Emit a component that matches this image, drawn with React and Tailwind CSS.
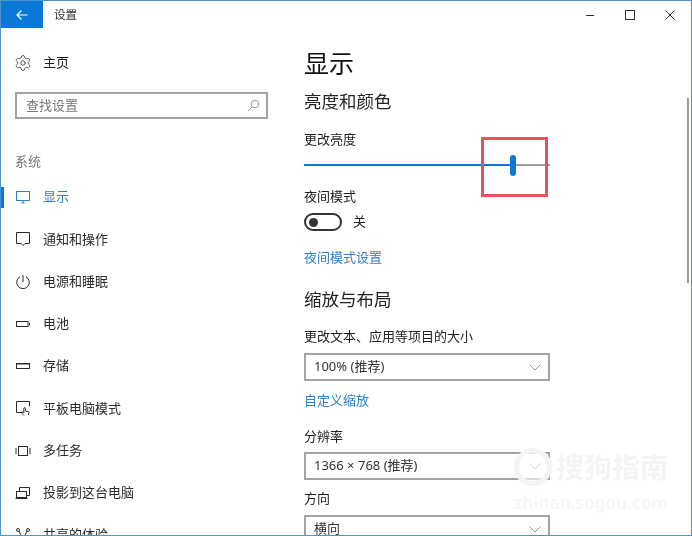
import React from "react";
import { Settings } from "lucide-react";

const font = { fontFamily: '"Noto Sans", "Noto Sans CJK SC", sans-serif' };

const Ico = ({ children }) => (
  <svg width="16" height="16" viewBox="0 0 16 16" fill="none" stroke="currentColor" strokeWidth="1" className="shrink-0">
    {children}
  </svg>
);

const icons = {
  display: (<Ico><rect x="1.5" y="2.5" width="13" height="9" /><path d="M8 11.5v2.5M6.5 14h3" /></Ico>),
  notify: (<Ico><path d="M1.5 1.5h13v11h-4.500l-2 2-2-2h-4.500z" /></Ico>),
  power: (<Ico><path d="M8 1v7" /><path d="M5 2.800a6.300 6.300 0 1 0 6 0" /></Ico>),
  battery: (<Ico><rect x="1.5" y="5.500" width="11.500" height="5" /><path d="M14.500 7v2.500" /></Ico>),
  storage: (<Ico><rect x="1.5" y="5.500" width="13" height="5" /><path d="M2 6.500h12" strokeOpacity="0.5" /></Ico>),
  tablet: (<Ico><path d="M7 12.500H1.500v-11h13v5" /><path d="M9 15.500c-1.500-1.500-2.500-2.500-2-3.200.5-.5 1.200 0 1.800.6V8.500a.8.8 0 0 1 1.600 0v2.500l3 .6c.5.1.7.5.6 1l-.6 2.400" /></Ico>),
  multi: (<Ico><rect x="3.500" y="3.500" width="9" height="9" /><path d="M1 5v6M15 5v6" /></Ico>),
  project: (<Ico><path d="M4.500 6V2.500h10v8H12" /><rect x="1.500" y="6.500" width="10" height="6" /><path d="M.5 13.500h12" /></Ico>),
  share: (<Ico><circle cx="3" cy="3" r="1.500" /><circle cx="13" cy="3" r="1.500" /><circle cx="8" cy="13" r="1.500" /><path d="M4 4l3.500 7.500M12 4l-3.500 7.500" /></Ico>),
};

const items = [
  ["display", "显示"],
  ["notify", "通知和操作"],
  ["power", "电源和睡眠"],
  ["battery", "电池"],
  ["storage", "存储"],
  ["tablet", "平板电脑模式"],
  ["multi", "多任务"],
  ["project", "投影到这台电脑"],
  ["share", "共享的体验"],
];

const Select = ({ children, className }) => (
  <div className={`${className} w-[246px] h-[28px] border-2 border-[#a3a3a3] flex items-center justify-between pl-[8px] pr-[7px] text-[13px] text-[#333]`}>
    <span>{children}</span>
    <svg width="12" height="7" viewBox="0 0 12 7" fill="none" stroke="#999" strokeWidth="1"><path d="M.5.5L6 6 11.500.5" /></svg>
  </div>
);

const Line = ({ className, children }) => (
  <div className={`${className} h-[20px] leading-[20px]`}>{children}</div>
);

export default function App() {
  return (
    <div style={font} className="relative w-[692px] h-[536px] overflow-hidden bg-white border border-[#4a94cf] flex flex-col text-[#222] blur-[0.3px]">
      <header className="flex h-[28px] shrink-0 items-center">
        <div className="w-[42px] h-[27px] -mt-[1px] bg-[#0a78d7] flex items-center justify-center text-white">
          <svg width="12" height="12" viewBox="0 0 12 12" fill="none" stroke="currentColor" strokeWidth="1.200"><path d="M11.500 6H1M5.500 1.500L1 6l4.500 4.500" /></svg>
        </div>
        <span className="ml-[11px] -mt-[1px] text-[11.500px] text-[#333]">设置</span>
        <div className="ml-auto flex items-center text-[#333]">
          <svg width="10" height="10" viewBox="0 0 10 10" fill="none" stroke="currentColor"><path d="M1 5.500h8" /></svg>
          <svg width="10" height="10" viewBox="0 0 10 10" fill="none" stroke="currentColor" className="ml-[30px]"><rect x=".5" y=".5" width="9" height="9" /></svg>
          <svg width="10" height="10" viewBox="0 0 10 10" fill="none" stroke="currentColor" className="ml-[30px] mr-[16px]"><path d="M.5.5l9 9M9.500.5l-9 9" /></svg>
        </div>
      </header>

      <div className="flex flex-1 min-h-0">
        <aside className="w-[303px] shrink-0 pt-[22px] text-[13px]">
          <div className="flex items-center h-[24px] pl-[13px] gap-[11px]">
            <Settings size={18} strokeWidth={1.200} color="#444" className="shrink-0" />
            <span>主页</span>
          </div>
          <div className="mt-[17px] ml-[14px] w-[253px] h-[27px] border-2 border-[#a3a3a3] flex items-center justify-between pl-[9px] pr-[6px] text-[#777]">
            <span>查找设置</span>
            <svg width="13" height="13" viewBox="0 0 13 13" fill="none" stroke="#999"><circle cx="8" cy="5" r="3.800" /><path d="M5.300 7.700L1 12" /></svg>
          </div>
          <Line className="mt-[32px] pl-[14px] text-[#777]">系统</Line>
          <nav className="mt-[5px]">
            {items.map(([k, label], i) => (
              <div key={k} className={`relative flex items-center h-[42.250px] pl-[14px] gap-[12px] ${i === 0 ? "text-[#2d7fc8]" : "text-[#2b2b2b]"}`}>
                {i === 0 && <span className="absolute left-0 top-[11px] w-[3px] h-[21px] bg-[#0a78d7]" />}
                {icons[k]}
                <span>{label}</span>
              </div>
            ))}
          </nav>
        </aside>

        <main className="flex-1 min-w-0 text-[13px]">
          <h1 className="mt-[16px] text-[25px] leading-[36px] text-[#111] h-[36px]">显示</h1>
          <h2 className="mt-[7px] text-[17.500px] leading-[26px] h-[26px] text-[#222]">亮度和颜色</h2>
          <Line className="mt-[15px]">更改亮度</Line>
          <div className="mt-[5px] w-[246px] h-[22px] flex items-center">
            <div className="w-[206px] h-[2px] bg-[#0a78d7]" />
            <div className="w-[6px] h-[21px] rounded-full bg-[#0a78d7] shrink-0" />
            <div className="flex-1 h-[2px] bg-[#a0a0a0]" />
          </div>
          <Line className="mt-[10px]">夜间模式</Line>
          <div className="mt-[7px] flex items-center h-[18px]">
            <div className="w-[38px] h-[18px] rounded-full border-2 border-[#333] flex items-center pl-[3px]">
              <div className="w-[9px] h-[9px] rounded-full bg-[#333]" />
            </div>
            <span className="ml-[11px]">关</span>
          </div>
          <Line className="mt-[16px] text-[#2d7fc8]">夜间模式设置</Line>
          <h2 className="mt-[19px] text-[17.500px] leading-[26px] h-[26px] text-[#222]">缩放与布局</h2>
          <Line className="mt-[14px]">更改文本、应用等项目的大小</Line>
          <Select className="mt-[7px]">100% (推荐)</Select>
          <Line className="mt-[9px] text-[#2d7fc8]">自定义缩放</Line>
          <Line className="mt-[16px]">分辨率</Line>
          <Select className="mt-[6px]">1366 × 768 (推荐)</Select>
          <Line className="mt-[8px]">方向</Line>
          <Select className="mt-[7px]">横向</Select>
        </main>
      </div>

      {/* overlays */}
      <div className="absolute right-[2px] top-[97px] w-[2px] h-[185px] bg-[#9a9a9a]" />
      <div className="absolute left-[480px] top-[136px] w-[67px] h-[60px] border-[3px] border-[#e8505b]" />
      <div className="absolute left-[513px] top-[446px] flex flex-col items-center text-[#f4f4f4] pointer-events-none">
        <div className="flex items-center">
          <div className="w-[38px] h-[38px] rounded-full border-[5px] border-[#f4f4f4] bg-white/60" />
          <span className="ml-[4px] text-[28px] leading-[40px] font-bold">搜狗指南</span>
        </div>
        <span className="text-[17px] leading-[18px] mt-[7px] font-bold text-[#f6f6f6]">zhinan.sogou.com</span>
      </div>
    </div>
  );
}
